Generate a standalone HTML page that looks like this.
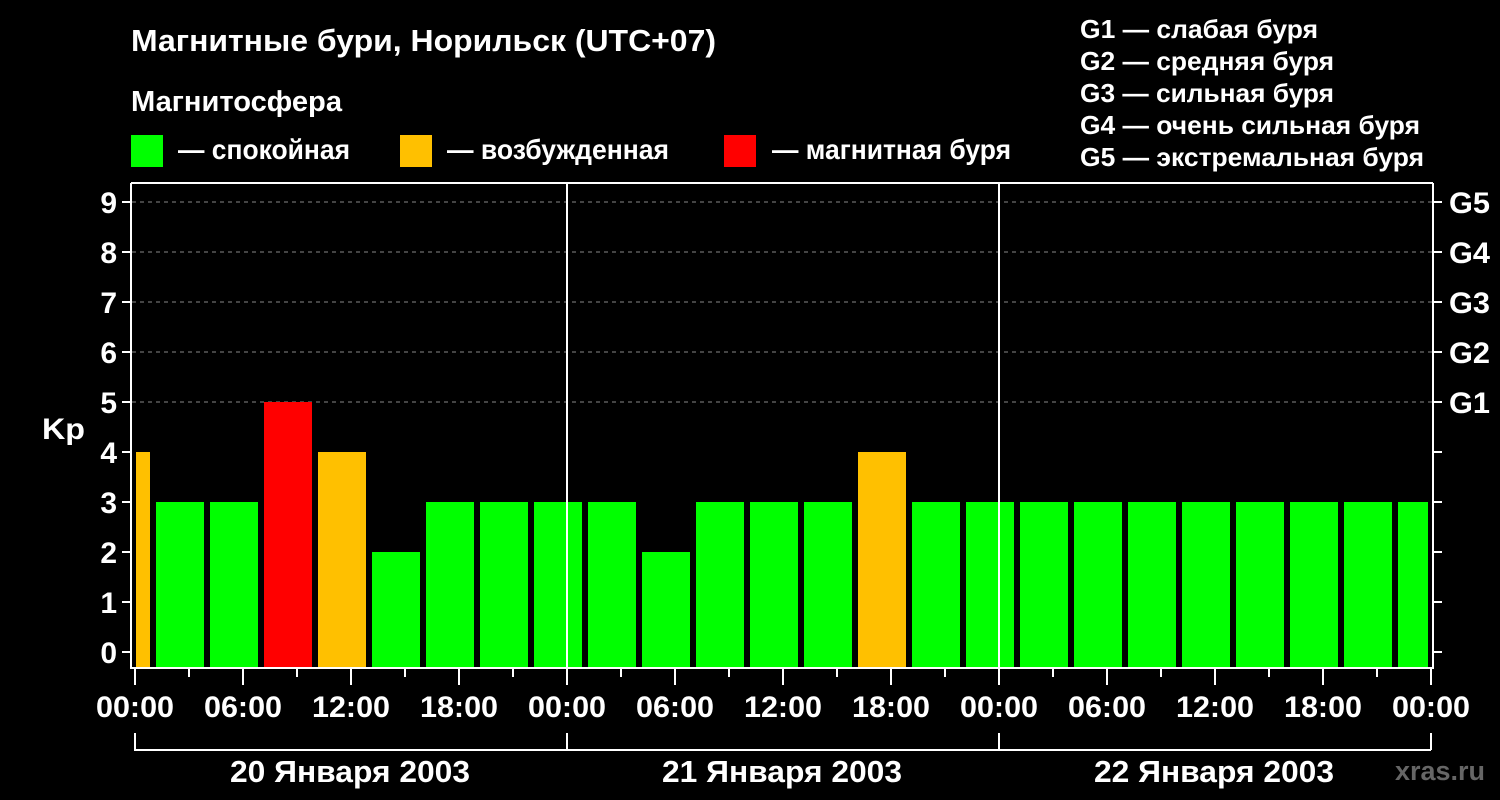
<!DOCTYPE html>
<html><head><meta charset="utf-8"><style>html,body{margin:0;padding:0;background:#000}svg{display:block}</style></head><body>
<svg width="1500" height="800" xmlns="http://www.w3.org/2000/svg" font-family="Liberation Sans, Arial, sans-serif" font-weight="bold" fill="#fff">
<rect width="1500" height="800" fill="#000"/>
<text x="131" y="51" font-size="31" textLength="585" lengthAdjust="spacingAndGlyphs">Магнитные бури, Норильск (UTC+07)</text>
<text x="131" y="111" font-size="29" textLength="211" lengthAdjust="spacingAndGlyphs">Магнитосфера</text>
<rect x="131" y="135" width="32" height="32" fill="#00ff00"/>
<text x="178" y="159" font-size="28" textLength="172" lengthAdjust="spacingAndGlyphs">— спокойная</text>
<rect x="400" y="135" width="32" height="32" fill="#ffc000"/>
<text x="447" y="159" font-size="28" textLength="222" lengthAdjust="spacingAndGlyphs">— возбужденная</text>
<rect x="724" y="135" width="32" height="32" fill="#ff0000"/>
<text x="772" y="159" font-size="28" textLength="239" lengthAdjust="spacingAndGlyphs">— магнитная буря</text>
<g font-size="26" lengthAdjust="spacingAndGlyphs">
<text x="1080" y="38" textLength="238" lengthAdjust="spacingAndGlyphs">G1 — слабая буря</text>
<text x="1080" y="70" textLength="254" lengthAdjust="spacingAndGlyphs">G2 — средняя буря</text>
<text x="1080" y="102" textLength="254" lengthAdjust="spacingAndGlyphs">G3 — сильная буря</text>
<text x="1080" y="134" textLength="340" lengthAdjust="spacingAndGlyphs">G4 — очень сильная буря</text>
<text x="1080" y="166" textLength="344" lengthAdjust="spacingAndGlyphs">G5 — экстремальная буря</text>
</g>
<g stroke="#888" stroke-width="1" stroke-dasharray="4,4">
<line x1="132" y1="202" x2="1432" y2="202"/><line x1="132" y1="252" x2="1432" y2="252"/><line x1="132" y1="302" x2="1432" y2="302"/><line x1="132" y1="352" x2="1432" y2="352"/><line x1="132" y1="402" x2="1432" y2="402"/>
</g>
<g>
<rect x="136" y="452" width="14" height="215" fill="#ffc000"/>
<rect x="156" y="502" width="48" height="165" fill="#00ff00"/>
<rect x="210" y="502" width="48" height="165" fill="#00ff00"/>
<rect x="264" y="402" width="48" height="265" fill="#ff0000"/>
<rect x="318" y="452" width="48" height="215" fill="#ffc000"/>
<rect x="372" y="552" width="48" height="115" fill="#00ff00"/>
<rect x="426" y="502" width="48" height="165" fill="#00ff00"/>
<rect x="480" y="502" width="48" height="165" fill="#00ff00"/>
<rect x="534" y="502" width="48" height="165" fill="#00ff00"/>
<rect x="588" y="502" width="48" height="165" fill="#00ff00"/>
<rect x="642" y="552" width="48" height="115" fill="#00ff00"/>
<rect x="696" y="502" width="48" height="165" fill="#00ff00"/>
<rect x="750" y="502" width="48" height="165" fill="#00ff00"/>
<rect x="804" y="502" width="48" height="165" fill="#00ff00"/>
<rect x="858" y="452" width="48" height="215" fill="#ffc000"/>
<rect x="912" y="502" width="48" height="165" fill="#00ff00"/>
<rect x="966" y="502" width="48" height="165" fill="#00ff00"/>
<rect x="1020" y="502" width="48" height="165" fill="#00ff00"/>
<rect x="1074" y="502" width="48" height="165" fill="#00ff00"/>
<rect x="1128" y="502" width="48" height="165" fill="#00ff00"/>
<rect x="1182" y="502" width="48" height="165" fill="#00ff00"/>
<rect x="1236" y="502" width="48" height="165" fill="#00ff00"/>
<rect x="1290" y="502" width="48" height="165" fill="#00ff00"/>
<rect x="1344" y="502" width="48" height="165" fill="#00ff00"/>
<rect x="1398" y="502" width="30" height="165" fill="#00ff00"/>
</g>
<g stroke="#fff" stroke-width="2" fill="none">
<line x1="131" y1="183" x2="1433" y2="183"/>
<line x1="131" y1="183" x2="131" y2="668"/>
<line x1="1433" y1="183" x2="1433" y2="668"/>
<line x1="130" y1="668" x2="1434" y2="668"/>
<line x1="567" y1="183" x2="567" y2="668"/>
<line x1="999" y1="183" x2="999" y2="668"/>
<path d="M122 652H131M122 602H131M122 552H131M122 502H131M122 452H131M122 402H131M122 352H131M122 302H131M122 252H131M122 202H131"/>
<path d="M1433 652H1442M1433 602H1442M1433 552H1442M1433 502H1442M1433 452H1442M1433 402H1442M1433 352H1442M1433 302H1442M1433 252H1442M1433 202H1442"/>
<path d="M135 668V685M243 668V685M351 668V685M459 668V685M567 668V685M675 668V685M783 668V685M891 668V685M999 668V685M1107 668V685M1215 668V685M1323 668V685M1431 668V685"/>
<path d="M189 668V677M297 668V677M405 668V677M513 668V677M621 668V677M729 668V677M837 668V677M945 668V677M1053 668V677M1161 668V677M1269 668V677M1377 668V677"/>
<path d="M135 733V750H1431M567 733V750M999 733V750M1431 733V750"/>
</g>
<g font-size="30" text-anchor="end">
<text x="117" y="663">0</text><text x="117" y="613">1</text><text x="117" y="563">2</text><text x="117" y="513">3</text><text x="117" y="463">4</text><text x="117" y="413">5</text><text x="117" y="363">6</text><text x="117" y="313">7</text><text x="117" y="263">8</text><text x="117" y="213">9</text>
</g>
<text x="42" y="439" font-size="30" textLength="43" lengthAdjust="spacingAndGlyphs">Kp</text>
<g font-size="30">
<text x="1449" y="213" textLength="41" lengthAdjust="spacingAndGlyphs">G5</text><text x="1449" y="263" textLength="41" lengthAdjust="spacingAndGlyphs">G4</text><text x="1449" y="313" textLength="41" lengthAdjust="spacingAndGlyphs">G3</text><text x="1449" y="363" textLength="41" lengthAdjust="spacingAndGlyphs">G2</text><text x="1449" y="413" textLength="41" lengthAdjust="spacingAndGlyphs">G1</text>
</g>
<g font-size="30">
<text x="96" y="717" textLength="78" lengthAdjust="spacingAndGlyphs">00:00</text><text x="204" y="717" textLength="78" lengthAdjust="spacingAndGlyphs">06:00</text><text x="312" y="717" textLength="78" lengthAdjust="spacingAndGlyphs">12:00</text><text x="420" y="717" textLength="78" lengthAdjust="spacingAndGlyphs">18:00</text><text x="528" y="717" textLength="78" lengthAdjust="spacingAndGlyphs">00:00</text><text x="636" y="717" textLength="78" lengthAdjust="spacingAndGlyphs">06:00</text><text x="744" y="717" textLength="78" lengthAdjust="spacingAndGlyphs">12:00</text><text x="852" y="717" textLength="78" lengthAdjust="spacingAndGlyphs">18:00</text><text x="960" y="717" textLength="78" lengthAdjust="spacingAndGlyphs">00:00</text><text x="1068" y="717" textLength="78" lengthAdjust="spacingAndGlyphs">06:00</text><text x="1176" y="717" textLength="78" lengthAdjust="spacingAndGlyphs">12:00</text><text x="1284" y="717" textLength="78" lengthAdjust="spacingAndGlyphs">18:00</text><text x="1392" y="717" textLength="78" lengthAdjust="spacingAndGlyphs">00:00</text>
</g>
<g font-size="31">
<text x="230" y="782" textLength="240" lengthAdjust="spacingAndGlyphs">20 Января 2003</text><text x="662" y="782" textLength="240" lengthAdjust="spacingAndGlyphs">21 Января 2003</text><text x="1094" y="782" textLength="240" lengthAdjust="spacingAndGlyphs">22 Января 2003</text>
</g>
<text x="1395" y="780" font-size="27" fill="#666" textLength="90" lengthAdjust="spacingAndGlyphs">xras.ru</text>
</svg>
</body></html>
